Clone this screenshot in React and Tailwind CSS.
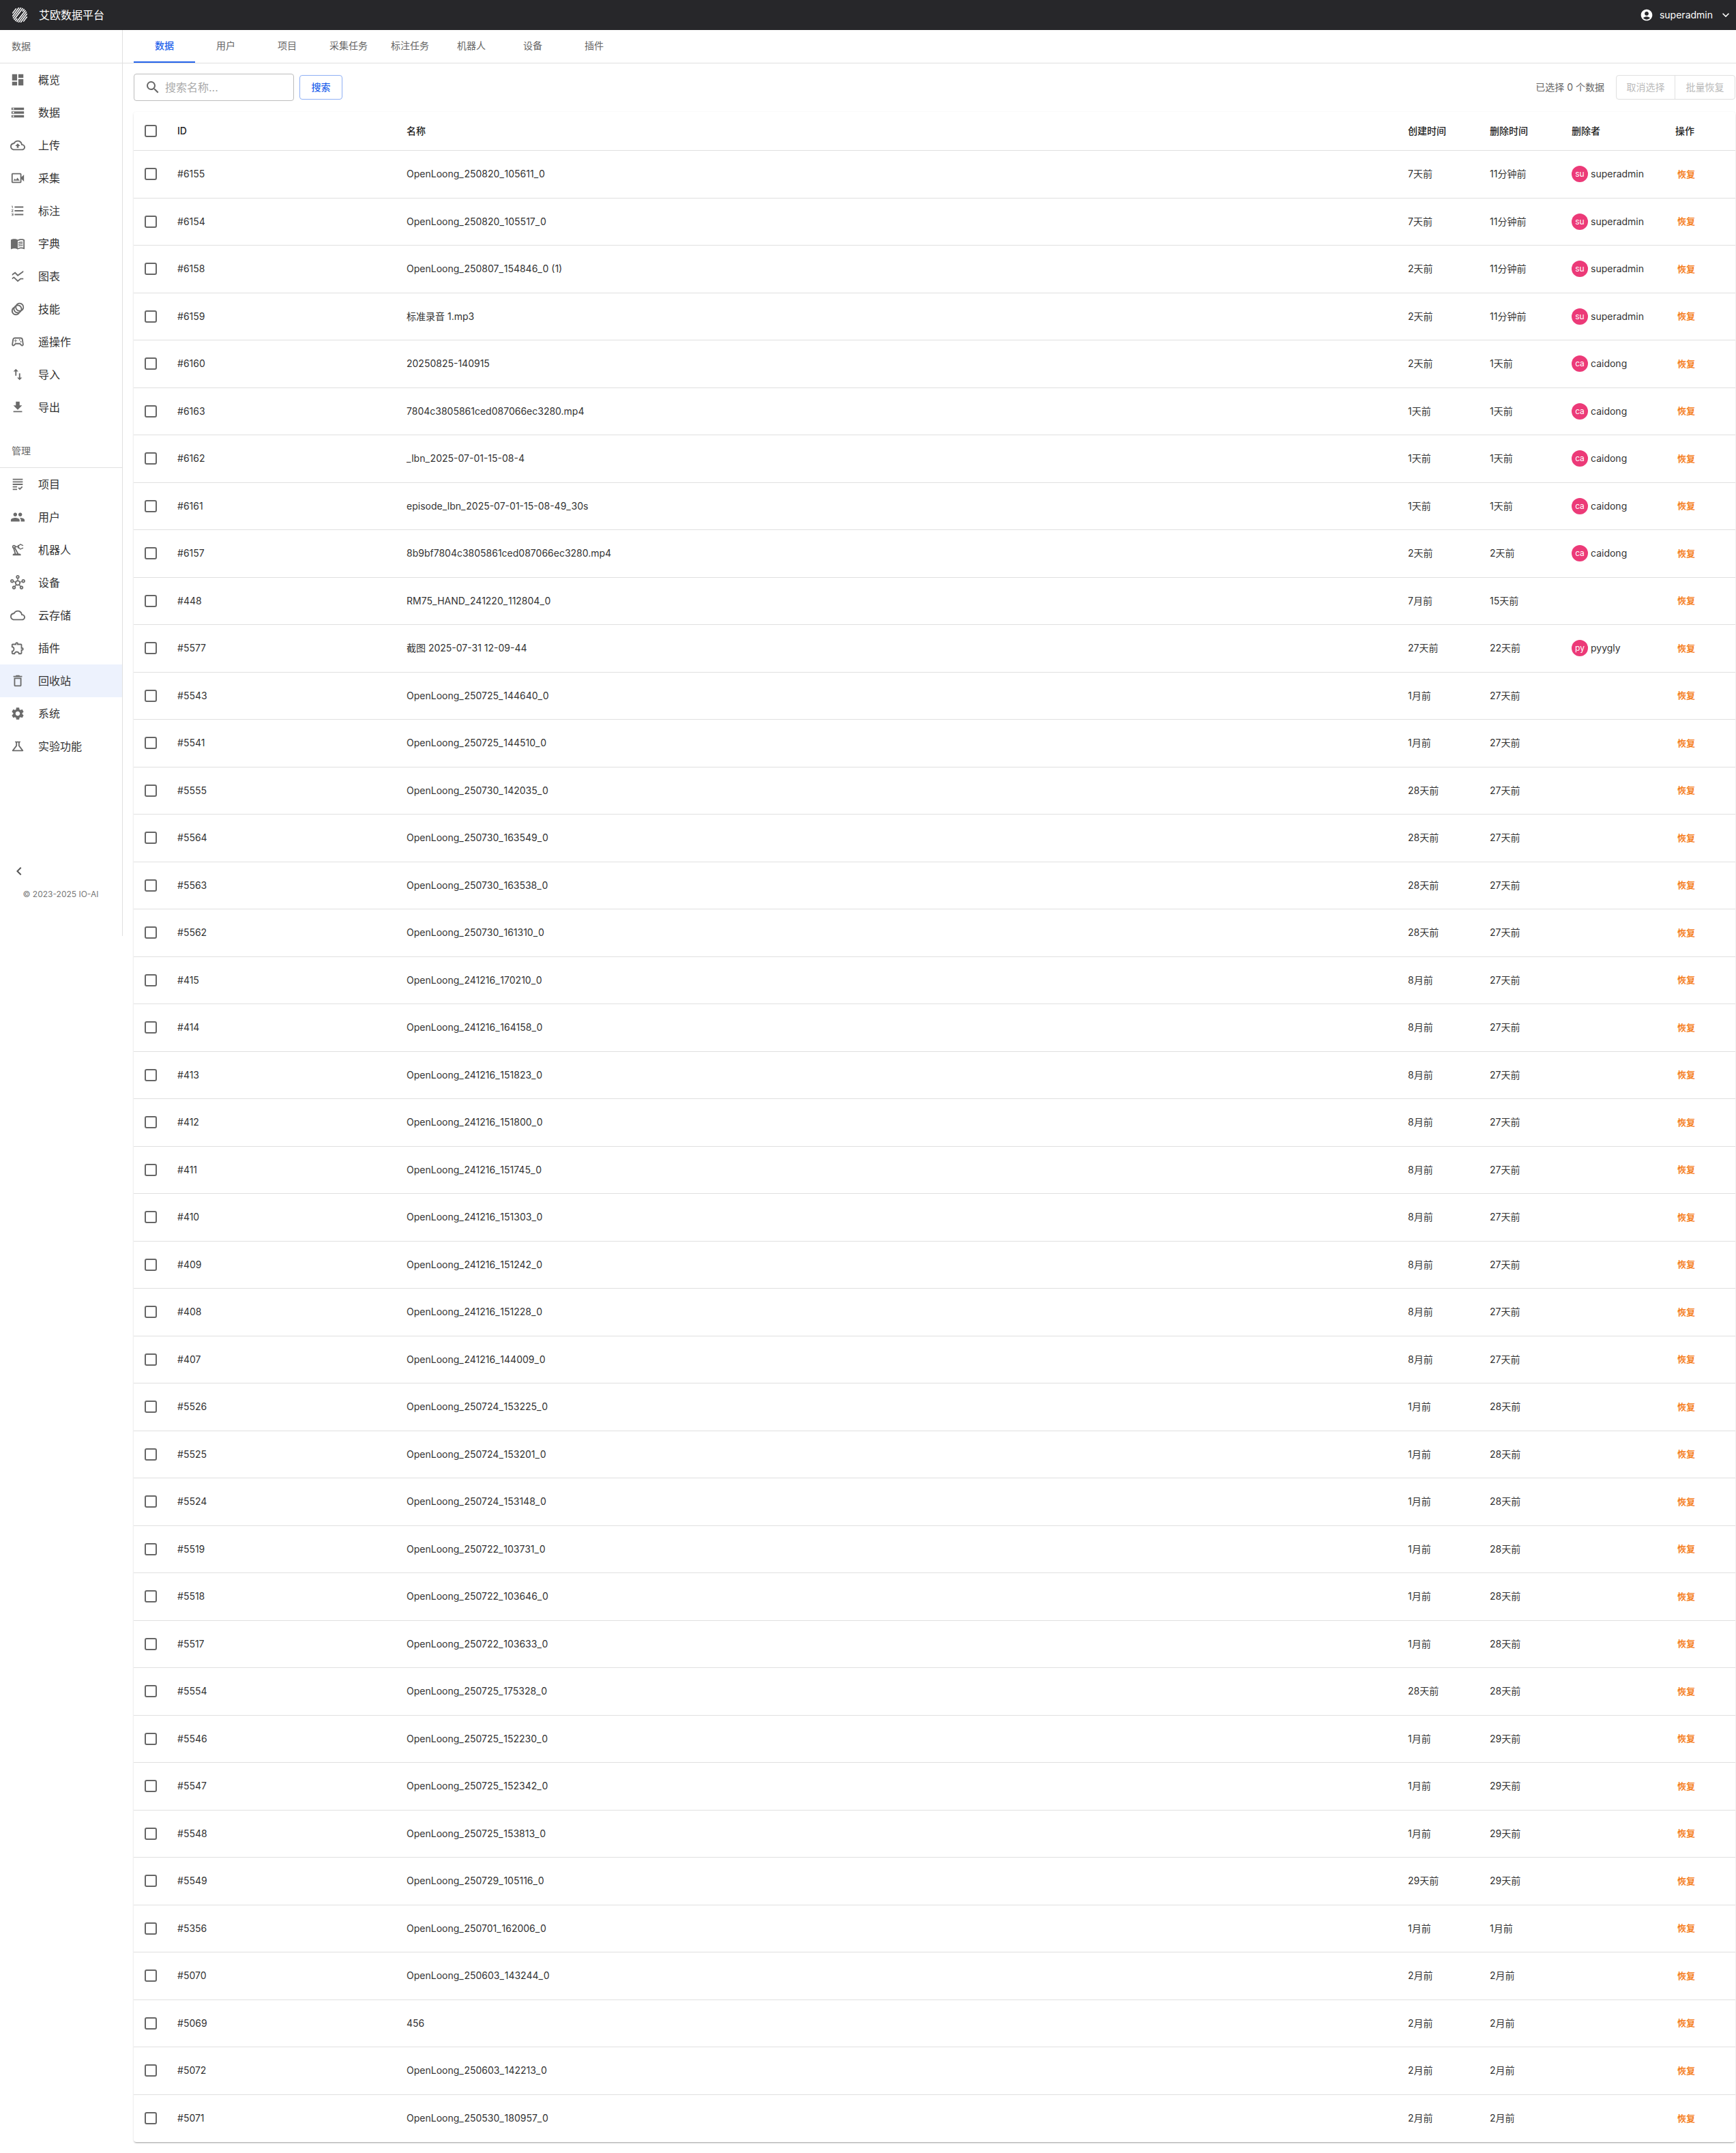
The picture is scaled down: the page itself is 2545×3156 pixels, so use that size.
import React from "react";
import {
  MdDashboard, MdStorage, MdOutlineCloudUpload, MdOutlineVideoCameraBack, MdFormatListNumbered, MdMenuBook,
  MdSsidChart, MdAnimation, MdOutlineSportsEsports, MdImportExport, MdFileDownload,
  MdOutlineGrading, MdPeople, MdOutlinePrecisionManufacturing, MdOutlineHub, MdOutlineCloud, MdOutlineExtension,
  MdDeleteOutline, MdSettings, MdOutlineScience, MdChevronLeft, MdSearch, MdAccountCircle, MdKeyboardArrowDown,
} from "react-icons/md";

const font = "font-['Inter','Noto_Sans_CJK_SC',sans-serif]";

const nav1 = [
  [MdDashboard, "概览"], [MdStorage, "数据"], [MdOutlineCloudUpload, "上传"], [MdOutlineVideoCameraBack, "采集"],
  [MdFormatListNumbered, "标注"], [MdMenuBook, "字典"], [MdSsidChart, "图表"], [MdAnimation, "技能"],
  [MdOutlineSportsEsports, "遥操作"], [MdImportExport, "导入"], [MdFileDownload, "导出"],
];
const nav2 = [
  [MdOutlineGrading, "项目"], [MdPeople, "用户"], [MdOutlinePrecisionManufacturing, "机器人"], [MdOutlineHub, "设备"],
  [MdOutlineCloud, "云存储"], [MdOutlineExtension, "插件"], [MdDeleteOutline, "回收站", true], [MdSettings, "系统"],
  [MdOutlineScience, "实验功能"],
];
const tabs = ["数据", "用户", "项目", "采集任务", "标注任务", "机器人", "设备", "插件"];

const S = "superadmin", C = "caidong", P = "pyygly";
const O = "OpenLoong_";
const rows = [
  ["6155", O + "250820_105611_0", "7天前", "11分钟前", S],
  ["6154", O + "250820_105517_0", "7天前", "11分钟前", S],
  ["6158", O + "250807_154846_0 (1)", "2天前", "11分钟前", S],
  ["6159", "标准录音 1.mp3", "2天前", "11分钟前", S],
  ["6160", "20250825-140915", "2天前", "1天前", C],
  ["6163", "7804c3805861ced087066ec3280.mp4", "1天前", "1天前", C],
  ["6162", "_lbn_2025-07-01-15-08-4", "1天前", "1天前", C],
  ["6161", "episode_lbn_2025-07-01-15-08-49_30s", "1天前", "1天前", C],
  ["6157", "8b9bf7804c3805861ced087066ec3280.mp4", "2天前", "2天前", C],
  ["448", "RM75_HAND_241220_112804_0", "7月前", "15天前"],
  ["5577", "截图 2025-07-31 12-09-44", "27天前", "22天前", P],
  ["5543", O + "250725_144640_0", "1月前", "27天前"],
  ["5541", O + "250725_144510_0", "1月前", "27天前"],
  ["5555", O + "250730_142035_0", "28天前", "27天前"],
  ["5564", O + "250730_163549_0", "28天前", "27天前"],
  ["5563", O + "250730_163538_0", "28天前", "27天前"],
  ["5562", O + "250730_161310_0", "28天前", "27天前"],
  ["415", O + "241216_170210_0", "8月前", "27天前"],
  ["414", O + "241216_164158_0", "8月前", "27天前"],
  ["413", O + "241216_151823_0", "8月前", "27天前"],
  ["412", O + "241216_151800_0", "8月前", "27天前"],
  ["411", O + "241216_151745_0", "8月前", "27天前"],
  ["410", O + "241216_151303_0", "8月前", "27天前"],
  ["409", O + "241216_151242_0", "8月前", "27天前"],
  ["408", O + "241216_151228_0", "8月前", "27天前"],
  ["407", O + "241216_144009_0", "8月前", "27天前"],
  ["5526", O + "250724_153225_0", "1月前", "28天前"],
  ["5525", O + "250724_153201_0", "1月前", "28天前"],
  ["5524", O + "250724_153148_0", "1月前", "28天前"],
  ["5519", O + "250722_103731_0", "1月前", "28天前"],
  ["5518", O + "250722_103646_0", "1月前", "28天前"],
  ["5517", O + "250722_103633_0", "1月前", "28天前"],
  ["5554", O + "250725_175328_0", "28天前", "28天前"],
  ["5546", O + "250725_152230_0", "1月前", "29天前"],
  ["5547", O + "250725_152342_0", "1月前", "29天前"],
  ["5548", O + "250725_153813_0", "1月前", "29天前"],
  ["5549", O + "250729_105116_0", "29天前", "29天前"],
  ["5356", O + "250701_162006_0", "1月前", "1月前"],
  ["5070", O + "250603_143244_0", "2月前", "2月前"],
  ["5069", "456", "2月前", "2月前"],
  ["5072", O + "250603_142213_0", "2月前", "2月前"],
  ["5071", O + "250530_180957_0", "2月前", "2月前"],
];

function Logo() {
  const lines = [];
  const R = 11;
  for (let i = -10; i <= 10; i += 2.5) {
    const h = Math.sqrt(Math.max(0, R * R - i * i));
    lines.push(<line key={i} x1={11 + i * 0.8 - h * 0.6} y1={11 + i * 0.6 + h * 0.8} x2={11 + i * 0.8 + h * 0.6} y2={11 + i * 0.6 - h * 0.8} stroke="#fff" strokeWidth="1.5" />);
  }
  return (
    <svg width="22" height="22" viewBox="0 0 22 22" className="shrink-0">
      {lines}
      <path d="M7 16 L15 6" stroke="#27272a" strokeWidth="2.4" />
    </svg>
  );
}

function NavItem({ icon: Icon, label, active }) {
  return (
    <div className={`flex h-12 items-center pl-4 ${active ? "bg-[#edf2fd]" : ""}`}>
      <span className="flex w-5 justify-center"><Icon className="size-5 shrink-0 scale-110 text-[#6b6b6b]" /></span>
      <span className="ml-5 text-base text-[#333]">{label}</span>
    </div>
  );
}

function Section({ title, items }) {
  return (
    <div>
      <div className="flex h-[49px] items-center border-b border-[#e0e0e0] pl-[17px] text-sm text-[#666]">{title}</div>
      {items.map(([icon, label, active]) => <NavItem key={label} icon={icon} label={label} active={active} />)}
    </div>
  );
}

function Check() {
  return <span className="block size-[18px] rounded-[3px] border-2 border-[#666]" />;
}

function Name({ text }) {
  const parts = text.split(/(_)/);
  return (
    <>
      {parts.map((p, i) => (p === "_" ? <span key={i} className="tracking-[0.8px]">_</span> : p))}
    </>
  );
}

function Row({ r }) {
  const [id, name, created, deleted, by] = r;
  return (
    <div className="flex h-[69.5px] items-center border-b border-[#e0e0e0] text-sm text-[#333] last:border-b-0">
      <div className="w-12 pl-4"><Check /></div>
      <div className="w-[336px] pl-4">#{id}</div>
      <div className="w-[1468px] pl-4"><Name text={name} /></div>
      <div className="w-[120px] pl-4">{created}</div>
      <div className="w-[120px] pl-4">{deleted}</div>
      <div className="flex w-[152px] items-center gap-1 pl-4">
        {by && <span className="flex size-6 items-center justify-center rounded-full bg-[#ec3a78] text-xs text-white">{by.slice(0, 2)}</span>}
        {by && <span>{by}</span>}
      </div>
      <div className="pl-[19px] text-[13px] font-semibold text-[#f5801f]">恢复</div>
    </div>
  );
}

export default function App() {
  return (
    <div className={`${font} min-h-[3156px] bg-white`}>
      <header className="flex h-11 items-center bg-[#27272a] pl-[18px] pr-[5px] text-white">
        <Logo />
        <span className="ml-[17px] text-base">艾欧数据平台</span>
        <div className="ml-auto flex items-center text-sm">
          <MdAccountCircle className="size-5" />
          <span className="ml-[9px]">superadmin</span>
          <MdKeyboardArrowDown className="ml-[9px] size-5" />
        </div>
      </header>
      <div className="flex items-start">
        <aside className="h-[1328px] w-[180px] shrink-0 border-r border-[#e0e0e0]">
          <Section title="数据" items={nav1} />
          <div className="mt-4"><Section title="管理" items={nav2} /></div>
          <div className="mt-[147px] pl-4"><MdChevronLeft className="size-6 text-[#555]" /></div>
          <div className="mt-[14px] pr-px text-center text-xs text-[#777]">© 2023-2025 IO-AI</div>
        </aside>
        <main className="min-w-0 flex-1">
          <nav className="flex h-[49px] border-b border-[#e0e0e0] pl-4">
            {tabs.map((t, i) => (
              <div key={t} className={`flex h-12 w-[90px] items-center justify-center border-b-2 text-sm ${i === 0 ? "border-[#2563eb] font-medium text-[#2563eb]" : "border-transparent text-[#666]"}`}>{t}</div>
            ))}
          </nav>
          <div className="flex h-[70px] items-center pl-4 pr-px">
            <div className="flex h-10 w-[235px] items-center rounded border border-[#bdbdbd] pl-[15px] text-base text-[#aaa]">
              <MdSearch className="size-6 shrink-0 text-[#666]" />
              <span className="ml-[6px]">搜索名称...</span>
            </div>
            <button className="ml-2 flex h-9 w-[63px] items-center justify-center rounded border border-[#8fb0f5] text-sm font-medium text-[#2563eb]">搜索</button>
            <span className="ml-auto text-sm text-[#666]">已选择 0 个数据</span>
            <div className="ml-[17px] flex h-9 rounded border border-[#e0e0e0] text-sm text-[#bbb]">
              <span className="flex w-[86px] items-center justify-center border-r border-[#e0e0e0]">取消选择</span>
              <span className="flex w-[87px] items-center justify-center">批量恢复</span>
            </div>
          </div>
          <div className="ml-4 mr-px mt-px rounded bg-white shadow-[0_2px_2px_-1px_rgba(0,0,0,0.3),0_1px_3px_rgba(0,0,0,0.12)]">
            <div className="flex h-[57px] items-center border-b border-[#e0e0e0] text-sm font-medium text-[#222]">
              <div className="w-12 pl-4"><Check /></div>
              <div className="w-[336px] pl-4">ID</div>
              <div className="w-[1468px] pl-4">名称</div>
              <div className="w-[120px] pl-4">创建时间</div>
              <div className="w-[120px] pl-4">删除时间</div>
              <div className="w-[152px] pl-4">删除者</div>
              <div className="pl-4">操作</div>
            </div>
            {rows.map((r) => <Row key={r[0]} r={r} />)}
          </div>
        </main>
      </div>
    </div>
  );
}
